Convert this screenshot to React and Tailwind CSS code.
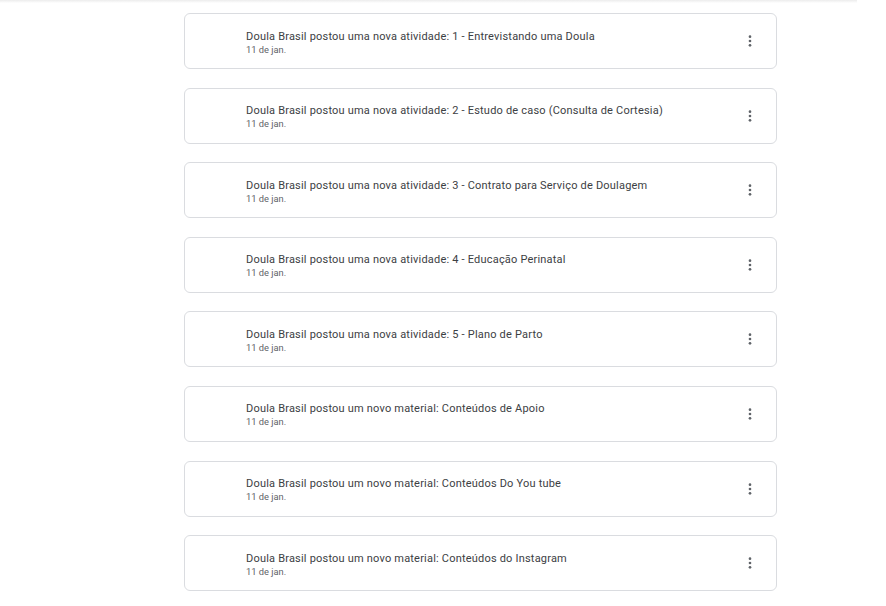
const items = [
  "Doula Brasil postou uma nova atividade: 1 - Entrevistando uma Doula",
  "Doula Brasil postou uma nova atividade: 2 - Estudo de caso (Consulta de Cortesia)",
  "Doula Brasil postou uma nova atividade: 3 - Contrato para Serviço de Doulagem",
  "Doula Brasil postou uma nova atividade: 4 - Educação Perinatal",
  "Doula Brasil postou uma nova atividade: 5 - Plano de Parto",
  "Doula Brasil postou um novo material: Conteúdos de Apoio",
  "Doula Brasil postou um novo material: Conteúdos Do You tube",
  "Doula Brasil postou um novo material: Conteúdos do Instagram",
];

const MoreIcon = () => (
  <svg width="16" height="16" viewBox="0 0 24 24" fill="#5f6368">
    <circle cx="12" cy="5.5" r="2" />
    <circle cx="12" cy="12" r="2" />
    <circle cx="12" cy="18.5" r="2" />
  </svg>
);

const App = () => {
  return (
    <div className="w-[886px] h-[606px] bg-white overflow-hidden font-['Roboto','Liberation_Sans',sans-serif]">
      {/* header shadow */}
      <div className="w-[857px] h-[3px] bg-gradient-to-b from-[#ececec] to-white" />

      <div className="flex flex-col gap-[18.6px] pl-[184px] pt-[10px]">
        {items.map((text, i) => (
          <div
            key={i}
            className="flex items-center w-[593px] h-[56px] border border-[#dadce0] rounded-[6px] pl-[61px] pr-[14px]"
          >
            <div className="flex flex-col flex-1 min-w-0 pt-[2px]">
              <p className="text-[11px] leading-[14px] text-[#3c4043] tracking-[0.2px]">{text}</p>
              <p className="text-[9.3px] leading-[11px] text-[#5f6368]">11 de jan.</p>
            </div>
            <button type="button" className="flex items-center justify-center w-6 h-6" aria-label="Mais opções">
              <MoreIcon />
            </button>
          </div>
        ))}
      </div>
    </div>
  );
};

export default App;
